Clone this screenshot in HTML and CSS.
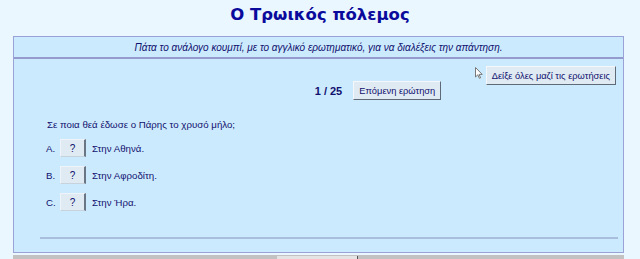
FILE: index.html
```html
<!DOCTYPE html>
<html lang="el">
<head>
    <meta charset="UTF-8">
    <meta name="viewport" content="width=device-width, initial-scale=1.0">
    <title>Ο Τρωικός πόλεμος</title>
    <link rel="stylesheet" href="styles.css">
</head>
<body>
    <h1 class="title">Ο Τρωικός πόλεμος</h1>

    <div class="quiz">
        <div class="quiz-head">Πάτα το ανάλογο κουμπί, με το αγγλικό ερωτηματικό, για να διαλέξεις την απάντηση.</div>
        <div class="quiz-body">
            <div class="top-row">
                <svg class="cursor" width="8" height="12" viewBox="0 0 8 12">
                    <path d="M0.5 0.5 L0.5 10 L2.8 7.8 L4.4 11.3 L5.6 10.8 L4.1 7.4 L7.2 7.4 Z" fill="#fff" stroke="#777" stroke-width="1"/>
                </svg>
                <button class="btn">Δείξε όλες μαζί τις ερωτήσεις</button>
            </div>
            <div class="nav-row">
                <span class="counter">1 / 25</span>
                <button class="btn">Επόμενη ερώτηση</button>
            </div>

            <p class="question">Σε ποια θεά έδωσε ο Πάρης το χρυσό μήλο;</p>
            <div class="answer">
                <span class="letter">A.</span>
                <button class="btn btn-q">?</button>
                <span>Στην Αθηνά.</span>
            </div>
            <div class="answer">
                <span class="letter">B.</span>
                <button class="btn btn-q">?</button>
                <span>Στην Αφροδίτη.</span>
            </div>
            <div class="answer">
                <span class="letter">C.</span>
                <button class="btn btn-q">?</button>
                <span>Στην Ήρα.</span>
            </div>

            <div class="rule"></div>
        </div>
    </div>

    <div class="bottom-bar">
        <div class="bottom-btn"></div>
    </div>
</body>
</html>
```

FILE: styles.css
```css
/* page */
body {
    font-family: "Liberation Sans", Arial, sans-serif;
    font-size: 9.7px;
    color: #10106e;
    background-color: #eaf7ff;
    margin: 0;
    padding: 0;
    height: 259px;
    overflow: hidden;
}

.title {
    margin: 0;
    height: 36px;
    padding-top: 5px;
    box-sizing: border-box;
    text-align: center;
    font-family: "DejaVu Sans", Verdana, sans-serif;
    font-size: 16.5px;
    font-weight: bold;
    color: #0a0a9c;
}

/* quiz box */
.quiz {
    margin: 0 16px 0 13px;
    border: 1px solid #9aa2d8;
    background-color: #cceafd;
    height: 217px;
    box-sizing: border-box;
}

.quiz-head {
    height: 22px;
    line-height: 21px;
    text-align: center;
    font-style: italic;
    font-size: 10px;
    border-bottom: 2px solid #949ccf;
    box-sizing: border-box;
}

.quiz-body {
    padding: 7px 7px 0 26px;
}

.top-row {
    display: flex;
    justify-content: flex-end;
    align-items: flex-start;
    gap: 3px;
}

.cursor {
    margin-top: 1px;
}

.nav-row {
    display: flex;
    justify-content: center;
    align-items: center;
    gap: 11px;
    margin-top: -4px;
    padding-left: 100px;
}

.counter {
    font-weight: bold;
    font-size: 11px;
}

/* buttons */
.btn {
    font-family: "Liberation Sans", Arial, sans-serif;
    font-size: 9.3px;
    color: #10106e;
    background-color: #dfeaf3;
    border: 1px solid;
    border-color: #f4f8fb #5e6a78 #5e6a78 #f4f8fb;
    padding: 2px 5px;
    height: 19px;
    cursor: pointer;
}

.btn-q {
    width: 26px;
    padding: 0;
    height: 18px;
    font-size: 10px;
    border-color: #eef4f9 #6b7684 #c6d2dc #eef4f9;
    border-width: 1px 2px 1px 1px;
}

.question {
    margin: 19px 0 9px 7px;
}

.answer {
    display: flex;
    align-items: center;
    gap: 6px;
    margin-left: 6px;
    height: 18px;
    margin-bottom: 9px;
}

.letter {
    width: 8px;
}

.rule {
    height: 2px;
    background-color: #a9bedc;
    margin: 26px -2px 0 0;
}

/* grey strip at the bottom */
.bottom-bar {
    margin: 2px 16px 0 13px;
    height: 6px;
    background-color: #c2c2c2;
    position: relative;
}

.bottom-btn {
    position: absolute;
    left: 264px;
    top: 1px;
    width: 80px;
    height: 6px;
    background-color: #e4e4e4;
    border-right: 1px solid #555;
}
```
